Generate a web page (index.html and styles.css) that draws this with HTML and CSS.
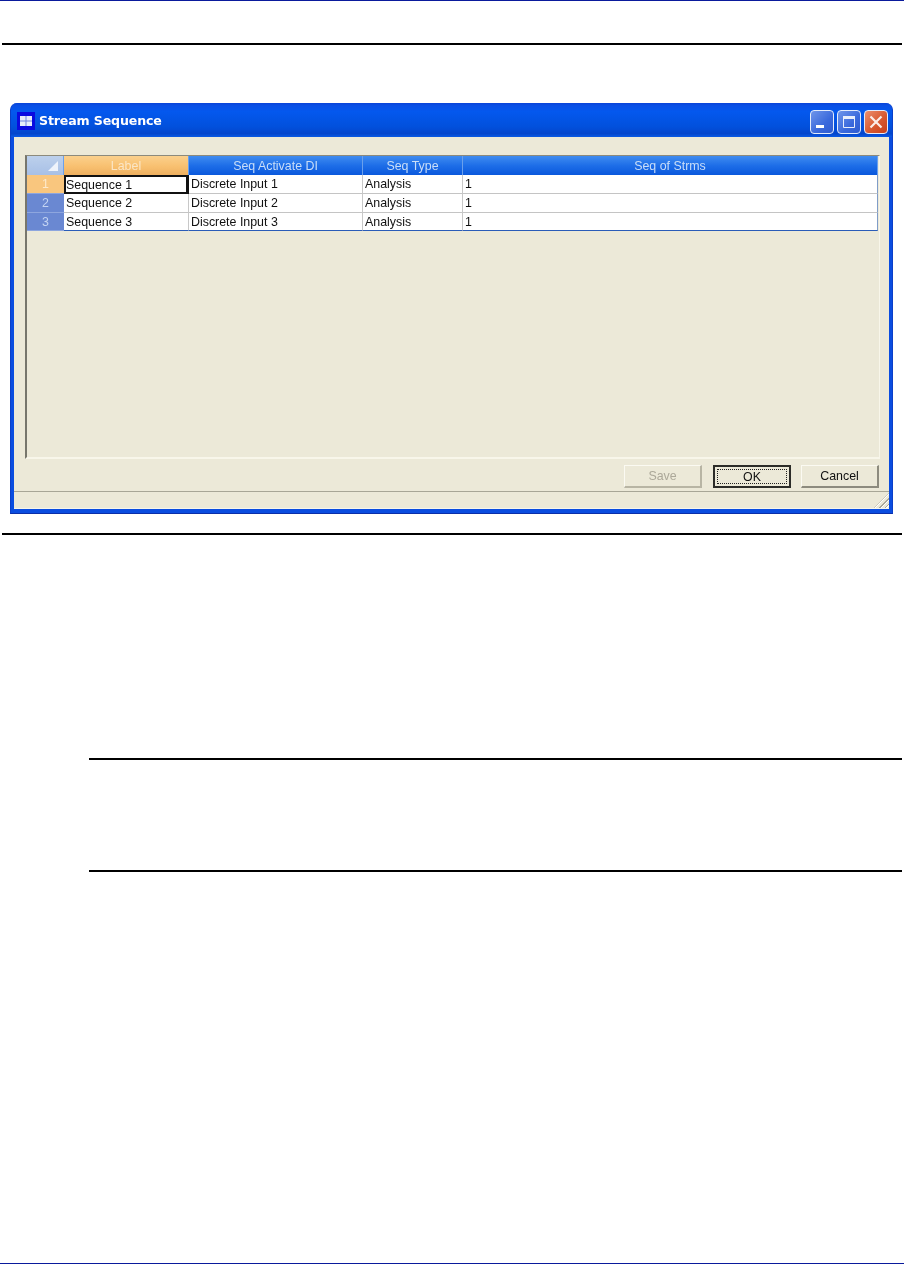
FILE: index.html
```html
<!DOCTYPE html>
<html lang="en">

<head>
    <meta charset="UTF-8">
    <meta name="viewport" content="width=device-width, initial-scale=1.0">
    <title>Stream Sequence</title>
    <link rel="stylesheet" href="styles.css">
</head>

<body>
    <div class="page">
        <hr class="rule-top">

        <div class="window">
            <div class="titlebar">
                <svg class="app-icon" width="18" height="18" viewBox="0 0 18 18">
                    <rect width="18" height="18" fill="#0a0ae0" />
                    <rect x="3" y="4" width="12" height="10" fill="#e6ecfa" />
                    <path d="M3 9h12M9 4v10" stroke="#6f82e0" stroke-width="1" fill="none" />
                </svg>
                <span class="title">Stream Sequence</span>
                <div class="controls">
                    <div class="ctl ctl-min">
                        <svg width="22" height="22" viewBox="0 0 22 22"><rect x="5" y="14" width="8" height="3" fill="#fff" /></svg>
                    </div>
                    <div class="ctl ctl-max">
                        <svg width="22" height="22" viewBox="0 0 22 22"><path d="M5.5 5.5h11v11h-11z" fill="none" stroke="#e8eefc" /><rect x="5" y="5" width="12" height="3" fill="#e8eefc" /></svg>
                    </div>
                    <div class="ctl ctl-close">
                        <svg width="22" height="22" viewBox="0 0 22 22"><path d="M5.5 5.5l11 11M16.5 5.5l-11 11" stroke="#fbeee8" stroke-width="2.2" fill="none" /></svg>
                    </div>
                </div>
            </div>

            <div class="client">
                <div class="grid-panel">
                    <div class="grid">
                        <div class="cell head corner"><span class="corner-mark"></span></div>
                        <div class="cell head head-active">Label</div>
                        <div class="cell head">Seq Activate DI</div>
                        <div class="cell head">Seq Type</div>
                        <div class="cell head">Seq of Strms</div>

                        <div class="cell rownum rownum-active">1</div>
                        <div class="cell data data-active">Sequence 1</div>
                        <div class="cell data">Discrete Input 1</div>
                        <div class="cell data">Analysis</div>
                        <div class="cell data">1</div>

                        <div class="cell rownum">2</div>
                        <div class="cell data">Sequence 2</div>
                        <div class="cell data">Discrete Input 2</div>
                        <div class="cell data">Analysis</div>
                        <div class="cell data">1</div>

                        <div class="cell rownum">3</div>
                        <div class="cell data last">Sequence 3</div>
                        <div class="cell data last">Discrete Input 3</div>
                        <div class="cell data last">Analysis</div>
                        <div class="cell data last">1</div>
                    </div>
                </div>

                <div class="buttons">
                    <div class="btn btn-disabled">Save</div>
                    <div class="btn btn-default"><span class="focus">OK</span></div>
                    <div class="btn">Cancel</div>
                </div>

                <div class="statusbar">
                    <div class="grip"></div>
                </div>
            </div>
        </div>

        <hr class="rule-mid">
        <hr class="rule-note-a">
        <hr class="rule-note-b">
        <div class="spacer"></div>
        <div class="footer-line"></div>
    </div>
</body>

</html>
```

FILE: styles.css
```css
* {
    box-sizing: border-box;
}

body {
    margin: 0;
    background-color: #fff;
    font-family: "Liberation Sans", Arial, sans-serif;
}

.page {
    height: 1264px;
    display: flex;
    flex-direction: column;
    border-top: 1px solid #0a1a9c;
    overflow: hidden;
}

hr {
    border: 0;
    height: 2px;
    background-color: #000;
    margin: 0;
    flex: none;
}

.rule-top {
    margin: 42px 2px 0 2px;
}

.rule-mid {
    margin: 19px 2px 0 2px;
}

.rule-note-a {
    margin: 223px 2px 0 89px;
}

.rule-note-b {
    margin: 110px 2px 0 89px;
}

.spacer {
    flex: 1;
}

.footer-line {
    height: 1px;
    background-color: #0a1a9c;
    flex: none;
}

/* window */
.window {
    flex: none;
    width: 883px;
    height: 411px;
    margin: 58px 0 0 10px;
    display: flex;
    flex-direction: column;
    border-radius: 7px 7px 0 0;
    background-color: #0a4de0;
    padding: 0 3px 4px 3px;
    border-left: 1px solid #0a3fc8;
    border-right: 1px solid #0a3fc8;
    border-bottom: 1px solid #0a2fa8;
    filter: blur(0.35px);
}

.titlebar {
    flex: none;
    height: 34px;
    margin: 0 -3px;
    padding: 0 4px 0 6px;
    display: flex;
    align-items: center;
    gap: 4px;
    border-radius: 7px 7px 0 0;
    background: linear-gradient(to bottom, #0a44d8 0%, #0a50e6 8%, #0458ee 25%, #0250dc 70%, #0446cc 90%, #0a5ae4 100%);
}

.app-icon {
    flex: none;
    margin-top: 1px;
}

.title {
    color: #fff;
    font-family: "DejaVu Sans", sans-serif;
    font-size: 12.6px;
    font-weight: bold;
    flex: 1;
    letter-spacing: -0.15px;
}

.controls {
    display: flex;
    gap: 3px;
    margin-top: 3px;
}

.ctl {
    width: 24px;
    height: 24px;
    border: 1px solid #e4ecfb;
    border-radius: 4px;
    display: flex;
    align-items: center;
    justify-content: center;
    background: linear-gradient(135deg, #6f95ea 0%, #3a69dc 60%, #2f5cd0 100%);
}

.ctl-close {
    background: linear-gradient(135deg, #ec9070 0%, #d95a30 55%, #c8401c 100%);
}

.client {
    flex: 1;
    background-color: #ece9d8;
    display: flex;
    flex-direction: column;
    padding: 18px 0 0 11px;
    min-height: 0;
}

.grid-panel {
    flex: none;
    width: 855px;
    height: 304px;
    border-top: 1px solid #8c8a7c;
    border-left: 2px solid #77766c;
    border-right: 1px solid #f8f6ea;
    border-bottom: 2px solid #f8f6ea;
}

.grid {
    display: grid;
    grid-template-columns: 37px 125px 174px 100px 415px;
    grid-template-rows: 19px 19px 19px 18px;
    width: 851px;
    font-size: 12.4px;
    color: #111;
}

.cell {
    white-space: nowrap;
    overflow: hidden;
    display: flex;
    align-items: center;
}

.head {
    justify-content: center;
    color: #c9def8;
    background: linear-gradient(to bottom, #3f8cf0 0%, #1e6ee8 50%, #0a58dc 100%);
    border-right: 1px solid #6aa0ec;
}

.head-active {
    color: #fbe6c6;
    background: linear-gradient(to bottom, #fbd08c 0%, #f8c070 55%, #eeb060 100%);
}

.corner {
    background: linear-gradient(to bottom, #bcd0ec, #a8c0e6);
    justify-content: flex-end;
    padding-right: 5px;
}

.corner-mark {
    width: 0;
    height: 0;
    border-style: solid;
    border-width: 0 0 10px 10px;
    border-color: transparent transparent #eef3fb transparent;
}

.rownum {
    justify-content: center;
    color: #c4d4f2;
    background-color: #6a88d2;
    border-bottom: 1px solid #8ea6de;
}

.rownum-active {
    background-color: #f9c67e;
    color: #fde9cb;
}

.data {
    background-color: #fff;
    padding-left: 2px;
    border-right: 1px solid #c8c8c8;
    border-bottom: 1px solid #c4c4c4;
}

.data:nth-child(5n) {
    border-right: 1px solid #7f9cc8;
}

.data.last {
    border-bottom: 1px solid #2a5cb8;
}

.data-active {
    border: 2px solid #111;
    border-right-width: 3px;
    padding-left: 0;
}

/* buttons */
.buttons {
    flex: none;
    display: flex;
    justify-content: flex-end;
    gap: 10px;
    padding-right: 10px;
    margin-top: 6px;
    height: 23px;
}

.btn {
    width: 78px;
    height: 23px;
    font-size: 12.4px;
    color: #111;
    display: flex;
    align-items: center;
    justify-content: center;
    background-color: #ece9d8;
    border-top: 1px solid #fbfaf2;
    border-left: 1px solid #fbfaf2;
    border-right: 2px solid #8d8b7e;
    border-bottom: 2px solid #8d8b7e;
}

.btn-disabled {
    color: #aca899;
    margin-right: 1px;
    border-right-color: #b8b5a4;
    border-bottom-color: #b8b5a4;
}

.btn-default {
    border: 2px solid #2c2c28;
    padding: 2px;
}

.focus {
    width: 100%;
    height: 100%;
    border: 1px dotted #222;
    display: flex;
    align-items: center;
    justify-content: center;
}

/* status bar */
.statusbar {
    flex: 1;
    margin: 3px 0 0 -11px;
    border-top: 1px solid #a8a696;
    border-bottom: 1px solid #f6f5ec;
    display: flex;
    justify-content: flex-end;
    align-items: flex-end;
}

.grip {
    width: 15px;
    height: 15px;
    background: repeating-linear-gradient(135deg, transparent 0 2px, #aca899 2px 3px, #fff 3px 4px);
    clip-path: polygon(100% 0, 100% 100%, 0 100%);
}
```
